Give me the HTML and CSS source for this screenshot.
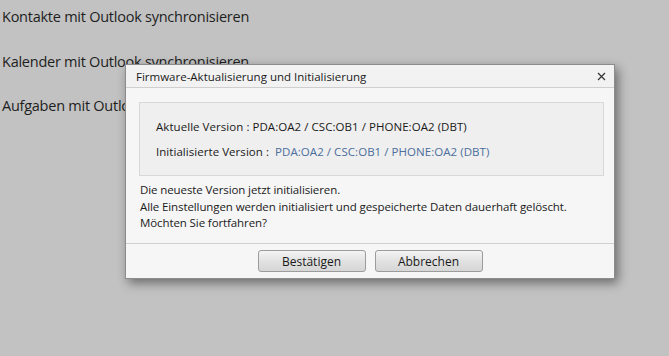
FILE: index.html
```html
<!DOCTYPE html>
<html lang="de">
<head>
    <meta charset="UTF-8">
    <title>Firmware-Aktualisierung</title>
    <link rel="stylesheet" href="styles.css">
</head>
<body>
    <ul class="sync-list">
        <li>Kontakte mit Outlook synchronisieren</li>
        <li>Kalender mit Outlook synchronisieren</li>
        <li>Aufgaben mit Outlook synchronisieren</li>
    </ul>

    <div class="dialog">
        <div class="dialog-title">
            <span>Firmware-Aktualisierung und Initialisierung</span>
            <svg class="close" width="9" height="9" viewBox="0 0 9 9">
                <path d="M1 1 L8 8 M8 1 L1 8" stroke="#333" stroke-width="1.2" fill="none"/>
            </svg>
        </div>
        <div class="dialog-body">
            <div class="version-box">
                <div class="version-row">Aktuelle Version : PDA:OA2 / CSC:OB1 / PHONE:OA2 (DBT)</div>
                <div class="version-row">Initialisierte Version : <span class="version-new">PDA:OA2 / CSC:OB1 / PHONE:OA2 (DBT)</span></div>
            </div>
            <p class="message">
                Die neueste Version jetzt initialisieren.<br>
                Alle Einstellungen werden initialisiert und gespeicherte Daten dauerhaft gelöscht.<br>
                Möchten Sie fortfahren?
            </p>
        </div>
        <div class="dialog-footer">
            <button class="btn">Bestätigen</button>
            <button class="btn">Abbrechen</button>
        </div>
    </div>
</body>
</html>
```

FILE: styles.css
```css
body {
    background-color: #c2c2c2;
    font-family: 'Open Sans', 'Noto Sans', sans-serif;
    margin: 0;
    padding: 0;
    width: 669px;
    height: 356px;
    overflow: hidden;
    position: relative;
}

.sync-list {
    list-style: none;
    margin: 0;
    padding: 6px 0 0 2px;
}

.sync-list li {
    font-size: 14.5px;
    color: #1e1e1e;
    height: 44.5px;
    line-height: 22px;
    letter-spacing: -0.25px;
}

.dialog {
    position: absolute;
    left: 125px;
    top: 64px;
    width: 488px;
    height: 213px;
    background-color: #f6f6f6;
    border: 1px solid #8c8c8c;
    box-shadow: 3px 4px 10px rgba(0, 0, 0, 0.45);
    display: flex;
    flex-direction: column;
}

.dialog-title {
    height: 22px;
    display: flex;
    align-items: center;
    justify-content: space-between;
    padding: 0 8px 0 10px;
    font-size: 11.5px;
    color: #1a1a1a;
    background-color: #f2f2f2;
    border-bottom: 1px solid #cfcfcf;
}

.dialog-body {
    padding: 14px 10px 0 13px;
    flex: 1;
}

.version-box {
    background-color: #efefef;
    border: 1px solid #d8d8d8;
    height: 72px;
    padding: 0 16px;
    display: flex;
    flex-direction: column;
    justify-content: center;
    gap: 7px;
}

.version-row {
    font-size: 11.5px;
    color: #1a1a1a;
    line-height: 18px;
    letter-spacing: 0.05px;
}

.version-new {
    color: #4b6e9c;
    margin-left: 3px;
}

.message {
    margin: 6px 0 0 1px;
    font-size: 11.5px;
    line-height: 16.5px;
    color: #1a1a1a;
    letter-spacing: -0.1px;
}

.dialog-footer {
    height: 35px;
    border-top: 1px solid #d0d0d0;
    display: flex;
    justify-content: center;
    align-items: flex-start;
    padding-top: 6px;
    gap: 9px;
    box-sizing: border-box;
}

.btn {
    width: 108px;
    height: 22px;
    font-family: 'Open Sans', 'Noto Sans', sans-serif;
    font-size: 12px;
    color: #1a1a1a;
    background: linear-gradient(#f4f4f4, #e2e2e2 50%, #d6d6d6);
    border: 1px solid #9c9c9c;
    border-radius: 3px;
    padding: 0;
}
```
